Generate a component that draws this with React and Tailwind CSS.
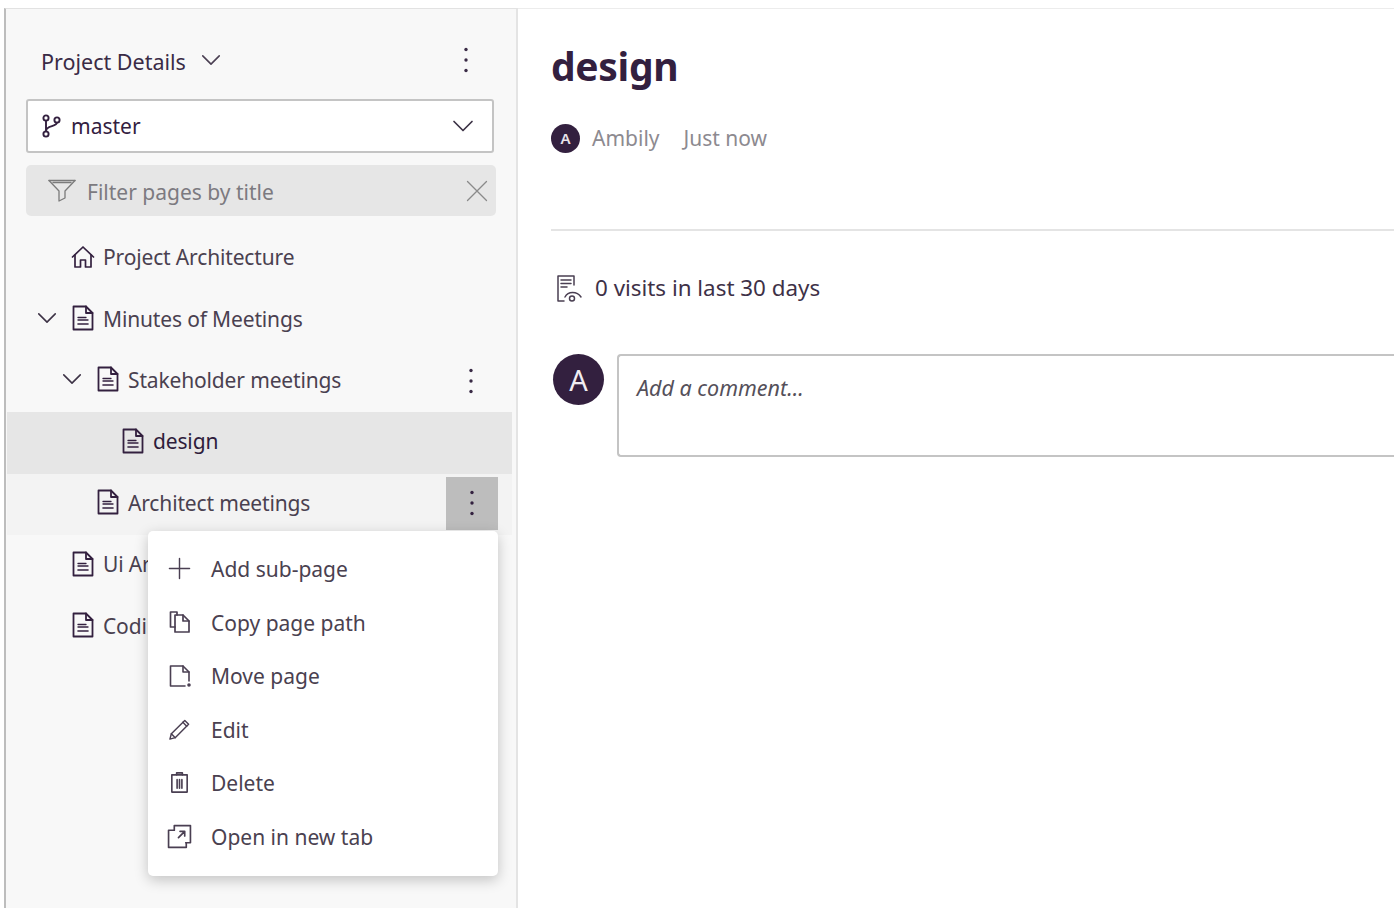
function Svg({ size = 24, box = "0 0 24 24", w, h, className = "", children, sw = 1.6 }) {
  return (
    <svg width={w || size} height={h || size} viewBox={box} fill="none" stroke="currentColor" strokeWidth={sw} strokeLinecap="round" strokeLinejoin="round" className={className}>
      {children}
    </svg>
  );
}
const Chevron = ({ size = 22, className = "" }) => (
  <Svg size={size} className={className} sw={1.7}><path d="M3 7.5 12 16.5 21 7.5" /></Svg>
);
const Dots = ({ className = "" }) => (
  <svg width="4" height="26" viewBox="0 0 4 26" className={className} fill="currentColor">
    <circle cx="2" cy="2.5" r="1.7" /><circle cx="2" cy="13" r="1.7" /><circle cx="2" cy="23.5" r="1.7" />
  </svg>
);
const Doc = () => (
  <Svg w={22} h={26} box="0 0 22 26" sw={1.8}>
    <path d="M1.500 1.500h12.500l6.500 6.500v16.500H1.500z" />
    <path d="M14 1.500V8h6.500" />
    <path d="M6 12.500h8" strokeWidth={1.300} />
    <path d="M6 15h10" strokeWidth={1.300} />
    <path d="M6 19h10" strokeWidth={1.600} />
  </Svg>
);

function Row({ indent, chevron, icon, label, selected, hover, children }) {
  return (
    <div className={`relative flex h-[61.4px] items-center ${selected ? "bg-[#e6e6e6]" : hover ? "bg-[#f3f3f3]" : ""}`}>
      <div className="flex items-center pb-[4px]" style={{ paddingLeft: indent }}>
        <div className="flex w-[36px] justify-center">
          {chevron && <Chevron size={22} className="text-[#3d3346]" />}
        </div>
        <div className="ml-[3px] flex w-[30px] justify-center text-[#33203f]">{icon || <Doc />}</div>
        <span className={`ml-[5px] pt-[2px] text-[21px] leading-none tracking-[-0.15px] whitespace-nowrap ${selected ? "text-[#2e1c3b]" : "text-[#4a4150]"}`}>{label}</span>
      </div>
      {children}
    </div>
  );
}

const menuItems = [
  ["Add sub-page", <Svg size={23} sw={1.5}><path d="M12 1.500v21M1.500 12h21" /></Svg>],
  ["Copy page path", <Svg size={24} sw={1.7}><path d="M9 5V2H2.500v15H7" /><path d="M7 5h8l6 6v11H7z" /><path d="M15 5v6h6" /></Svg>],
  ["Move page", <Svg size={24} sw={1.6}><path d="M21 17V8l-6-6H2.500v20H17" /><path d="M15 2v6h6" /><circle cx="21" cy="21" r="1" fill="currentColor" /></Svg>],
  ["Edit", <Svg size={23} sw={1.5}><path d="M2 22l1.500-5.500L17.500 2.500l4 4L7.500 20.500z" /><path d="M15.500 4.500l4 4" /><path d="M3.500 16.500l4 4" /></Svg>],
  ["Delete", <Svg size={23} sw={1.7}><path d="M4 4h16v18H4z" /><path d="M9 4V2h6v2" /><path d="M9.500 9v9M12 9v9M14.500 9v9" /></Svg>],
  ["Open in new tab", <Svg size={25} sw={1.6}><path d="M7 6H1.500v16.500h17V18" /><path d="M7 6V1.500h15.500V18H18" /><path d="M11 13l6-6M12.500 7H17v4.500" /></Svg>],
];

export default function App() {
  return (
    <div
      className="flex h-[914px] w-[1400px] overflow-hidden bg-white pt-2 pl-1 text-[#33203f]"
      style={{ fontFamily: '"Noto Sans", "Open Sans", sans-serif' }}
    >
      <aside className="relative flex h-[900px] w-[514px] shrink-0 flex-col border-t border-r-2 border-l-2 border-t-[#e2e2e2] border-r-[#e4e4e4] border-l-[#bdbdbd] bg-[#f8f8f8] pr-[4px]">
        <div className="flex h-[90px] items-center pt-[13px] pr-[44px] pb-[2px] pl-[35px]">
          <span className="pt-[5px] text-[21.500px] leading-none text-[#3a2b46]">Project Details</span>
          <Chevron size={22} className="ml-[14px] text-[#4a3f52]" />
          <Dots className="ml-auto text-[#3a2b46]" />
        </div>
        <div className="mr-[18px] ml-[20px] flex h-[54px] items-center rounded-[3px] border-2 border-[#c4c4c4] bg-white pr-[17px] pl-[12px]">
          <Svg size={24} sw={1.9} className="text-[#33203f]">
            <circle cx="6" cy="4" r="2.600" /><circle cx="6" cy="20" r="2.600" /><circle cx="17" cy="6" r="2.600" />
            <path d="M6 6.600v10.800M17 8.600c0 4-11 3-11 8" />
          </Svg>
          <span className="ml-[7px] text-[21px] leading-none text-[#33203f]">master</span>
          <Chevron size={24} className="ml-auto text-[#3d3346]" />
        </div>
        <div className="mt-[12px] mr-[16px] ml-[20px] flex h-[51px] items-center rounded-[5px] bg-[#e6e6e6] pr-[6px] pl-[22px]">
          <Svg w={28} h={24} box="0 0 28 24" sw={1.300} className="text-[#7b7b7b]">
            <path d="M1 1.500h26" /><path d="M1 1.500 11 12v10l6-3v-7L27 1.500" /><path d="M5 3.500h18" />
          </Svg>
          <span className="ml-[11px] pt-[4px] text-[21px] leading-none text-[#7c7a80]">Filter pages by title</span>
          <Svg size={24} sw={1.3} className="mr-[1px] ml-auto text-[#8a8a8a]"><path d="M2.500 2.500l19 19M21.500 2.500l-19 19" /></Svg>
        </div>
        <div className="mt-[12px] ml-[1px] flex flex-col">
          <Row indent={22} label="Project Architecture" icon={
            <Svg size={24} sw={1.7}><path d="M1.500 12 12 2l10.500 10" /><path d="M4 10v12h5.500v-7h5v7H20V10" /></Svg>
          } />
          <Row indent={22} chevron label="Minutes of Meetings" />
          <Row indent={47} chevron label="Stakeholder meetings">
            <Dots className="absolute right-[39px] text-[#3a2b46]" />
          </Row>
          <Row indent={72} label="design" selected />
          <Row indent={47} label="Architect meetings" hover>
            <div className="absolute top-[3px] right-[14px] flex h-[53px] w-[52px] items-center justify-center bg-[#bdbdbd]">
              <Dots className="text-[#33203f]" />
            </div>
          </Row>
          <Row indent={22} label="Ui Ar" />
          <Row indent={22} label="Codi" />
        </div>
        <div className="absolute top-[522px] left-[142px] flex h-[345px] w-[350px] flex-col rounded-[5px] bg-white py-[11px] shadow-[0_4px_14px_rgba(0,0,0,0.22)]">
          {menuItems.map(([label, icon]) => (
            <div key={label} className="flex h-[53.500px] items-center">
              <div className="flex w-[63px] justify-center text-[#4a3f52]">{icon}</div>
              <span className="pt-[2px] text-[21px] leading-none text-[#4a4150]">{label}</span>
            </div>
          ))}
        </div>
      </aside>
      <main className="min-w-0 flex-1 pr-[6px] pl-[33px]">
        <div className="-ml-[33px] h-px bg-[#ececec]" />
        <h1 className="mt-[29px] text-[39px] leading-[56px] font-bold tracking-[-0.3px] text-[#33203f]">design</h1>
        <div className="mt-[30px] flex items-center">
          <div className="flex h-[29px] w-[29px] items-center justify-center rounded-full bg-[#33203f] text-[15px] leading-none font-semibold text-[#e8e4ea]">A</div>
          <span className="ml-[12px] text-[21px] leading-none text-[#8d8a90]">Ambily</span>
          <span className="ml-[24px] text-[21px] leading-none text-[#8d8a90]">Just now</span>
        </div>
        <div className="mt-[76px] h-[2px] bg-[#e4e4e4]" />
        <div className="mt-[42px] flex items-center">
          <Svg size={30} box="0 0 30 30" sw={1.5} className="ml-[3px] text-[#4a3f52]">
            <path d="M20 12V3H4v25h6" /><path d="M7 7h10M7 10.500h10M7 14h6" />
            <path d="M11 24c3-6 12-6 16 0" /><circle cx="18" cy="25.500" r="2.500" />
          </Svg>
          <span className="ml-[11px] text-[22.400px] leading-none text-[#3e3147]">0 visits in last 30 days</span>
        </div>
        <div className="mt-[51px] flex items-start">
          <div className="ml-[2px] flex h-[51px] w-[51px] shrink-0 items-center justify-center rounded-full bg-[#33203f] text-[29px] leading-none text-[#f0edf2]">A</div>
          <div className="ml-[13px] h-[103px] flex-1 rounded-l-[4px] border-2 border-r-0 border-[#c4c4c4] pt-[21px] pl-[18px]">
            <span className="text-[21.500px] leading-none text-[#55505a] italic">Add a comment...</span>
          </div>
        </div>
      </main>
    </div>
  );
}
